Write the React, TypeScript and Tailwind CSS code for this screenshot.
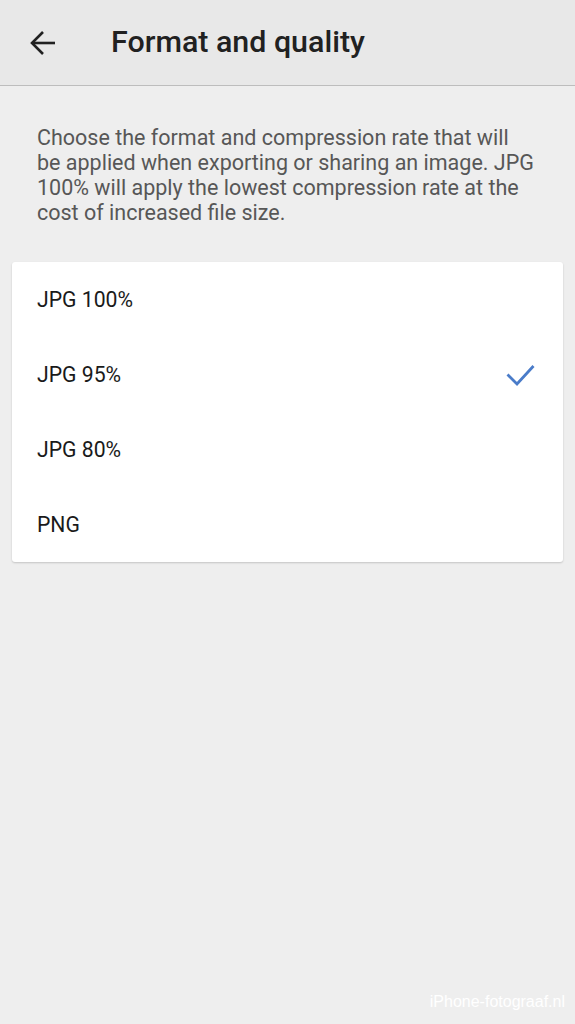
const options = ['JPG 100%', 'JPG 95%', 'JPG 80%', 'PNG']

function BackArrow() {
  return (
    <svg width="26" height="26" viewBox="0 0 26 26" fill="none" stroke="#212121" strokeWidth="2.6">
      <path d="M25 13H2.5" />
      <path d="M13 2 2 13l11 11" />
    </svg>
  )
}

function Tick() {
  return (
    <svg width="29" height="22" viewBox="0 0 29 22" fill="none" stroke="#4a7cc9" strokeWidth="2.8">
      <path d="M1.5 10.5 11 20 27.5 2" />
    </svg>
  )
}

export default function App() {
  const selected = 'JPG 95%'
  return (
    <div
      className="relative flex h-[1024px] w-[575px] flex-col bg-[#eeeeee]"
      style={{ fontFamily: 'Roboto, "Noto Sans", sans-serif' }}
    >
      <header className="flex h-[86px] items-center border-b border-[#bdbdbd] bg-[#e8e8e8]">
        <div className="flex w-[111px] items-center pl-[30px]">
          <BackArrow />
        </div>
        <h1 className="text-[30.4px] font-medium leading-none text-[#212121]">Format and quality</h1>
      </header>

      <p className="px-[37px] pt-[39px] pb-[37px] text-[21.5px] leading-[25px] text-[#575757]">
        Choose the format and compression rate that will
        <br />
        be applied when exporting or sharing an image. JPG
        <br />
        100% will apply the lowest compression rate at the
        <br />
        cost of increased file size.
      </p>

      <ul className="mx-[12px] rounded-[3px] bg-white shadow-[0_1px_2px_rgba(0,0,0,0.18)]">
        {options.map((o) => (
          <li key={o} className="flex h-[75px] items-center justify-between pl-[25px] pr-[28px]">
            <span className="text-[21.2px] text-[#1a1a1a]">{o}</span>
            {o === selected && <Tick />}
          </li>
        ))}
      </ul>

      <span
        className="absolute bottom-[10px] right-[10px] text-[16px] text-white"
        style={{ fontFamily: '"Liberation Sans", Arial, sans-serif' }}
      >
        iPhone-fotograaf.nl
      </span>
    </div>
  )
}
